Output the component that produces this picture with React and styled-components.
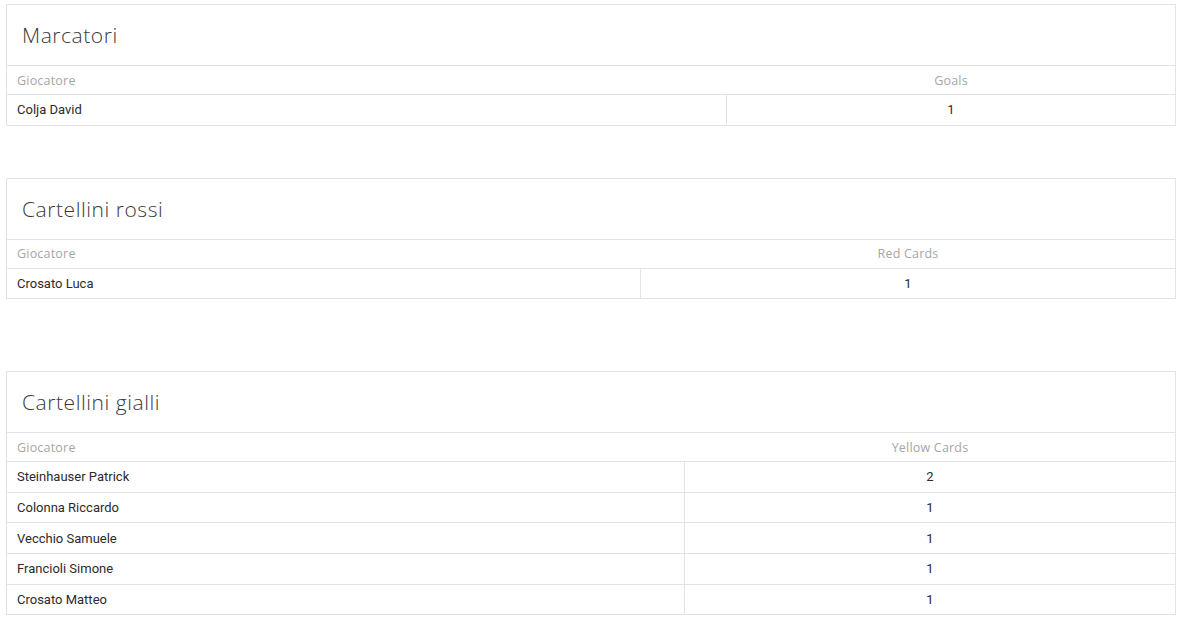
import styled, { createGlobalStyle } from 'styled-components';

const GlobalStyle = createGlobalStyle`
  html, body {
    margin: 0;
    padding: 0;
    background: #fff;
  }
  body {
    font-family: 'Roboto', 'Liberation Sans', sans-serif;
    color: #333;
  }
`;

const Page = styled.div`
  padding: 4px 7px 0 6px;
`;

const Card = styled.section`
  border: 1px solid #e3e3e3;
  margin-top: ${(p) => p.$gap || 0}px;
`;

const Title = styled.h2`
  margin: 0;
  height: 60px;
  display: flex;
  align-items: center;
  padding: 0 15px;
  border-bottom: 1px solid #e3e3e3;
  font-family: 'Open Sans', 'Liberation Sans', sans-serif;
  font-weight: 300;
  font-size: 21px;
  letter-spacing: 0.55px;
  color: #3a3a3a;
`;

const Row = styled.div`
  display: grid;
  grid-template-columns: ${(p) => p.$split}px 1fr;
  &:not(:last-child) {
    border-bottom: 1px solid #e3e3e3;
  }
`;

const HeadCell = styled.div`
  height: 28px;
  display: flex;
  align-items: center;
  justify-content: ${(p) => (p.$center ? 'center' : 'flex-start')};
  padding: 0 10px;
  font-family: 'Open Sans', 'Liberation Sans', sans-serif;
  font-size: 12.5px;
  letter-spacing: 0.2px;
  color: #a6a6a6;
`;

const Cell = styled.div`
  height: 29.6px;
  display: flex;
  align-items: center;
  justify-content: ${(p) => (p.$center ? 'center' : 'flex-start')};
  padding: 0 10px;
  font-size: 13px;
  font-weight: 400;
  color: #2b2b2b;
  &:first-child {
    border-right: 1px solid #e3e3e3;
  }
`;

const tables = [
  {
    title: 'Marcatori',
    stat: 'Goals',
    split: 720,
    gap: 0,
    rows: [['Colja David', 1]],
  },
  {
    title: 'Cartellini rossi',
    stat: 'Red Cards',
    split: 634,
    gap: 52,
    rows: [['Crosato Luca', 1]],
  },
  {
    title: 'Cartellini gialli',
    stat: 'Yellow Cards',
    split: 678,
    gap: 72,
    rows: [
      ['Steinhauser Patrick', 2],
      ['Colonna Riccardo', 1],
      ['Vecchio Samuele', 1],
      ['Francioli Simone', 1],
      ['Crosato Matteo', 1],
    ],
  },
];

function StatTable({ title, stat, split, gap, rows }) {
  return (
    <Card $gap={gap}>
      <Title>{title}</Title>
      <div>
        <Row $split={split}>
          <HeadCell>Giocatore</HeadCell>
          <HeadCell $center>{stat}</HeadCell>
        </Row>
        {rows.map(([name, count]) => (
          <Row key={name} $split={split}>
            <Cell>{name}</Cell>
            <Cell $center>{count}</Cell>
          </Row>
        ))}
      </div>
    </Card>
  );
}

export default function App() {
  return (
    <Page>
      <GlobalStyle />
      {tables.map((t) => (
        <StatTable key={t.title} {...t} />
      ))}
    </Page>
  );
}
